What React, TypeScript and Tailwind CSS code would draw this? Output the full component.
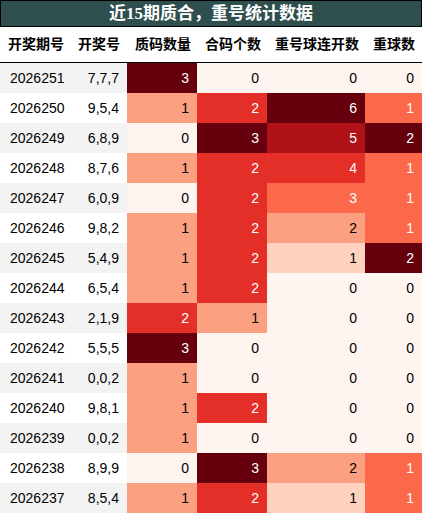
import React from 'react'

type Row = [string, string, number, number, number, number]

const rows: Row[] = [
  ['2026251', '7,7,7', 3, 0, 0, 0],
  ['2026250', '9,5,4', 1, 2, 6, 1],
  ['2026249', '6,8,9', 0, 3, 5, 2],
  ['2026248', '8,7,6', 1, 2, 4, 1],
  ['2026247', '6,0,9', 0, 2, 3, 1],
  ['2026246', '9,8,2', 1, 2, 2, 1],
  ['2026245', '5,4,9', 1, 2, 1, 2],
  ['2026244', '6,5,4', 1, 2, 0, 0],
  ['2026243', '2,1,9', 2, 1, 0, 0],
  ['2026242', '5,5,5', 3, 0, 0, 0],
  ['2026241', '0,0,2', 1, 0, 0, 0],
  ['2026240', '9,8,1', 1, 2, 0, 0],
  ['2026239', '0,0,2', 1, 0, 0, 0],
  ['2026238', '8,9,9', 0, 3, 2, 1],
  ['2026237', '8,5,4', 1, 2, 1, 1],
]

const maxes = [3, 3, 6, 2]

// Reds colormap steps, keyed by value / column max
const shade = (v: number, max: number) => {
  const r = Math.round((v / max) * 6)
  switch (r) {
    case 0: return 'bg-[#fff5f0] text-black'
    case 1: return 'bg-[#fdd2bf] text-black'
    case 2: return 'bg-[#fca082] text-black'
    case 3: return 'bg-[#fb694a] text-white'
    case 4: return 'bg-[#e32f27] text-white'
    case 5: return 'bg-[#b11218] text-white'
    default: return 'bg-[#67000d] text-white'
  }
}

const headers = ['开奖期号', '开奖号', '质码数量', '合码个数', '重号球连开数', '重球数']

const App = () => {
  return (
    <div className="w-[422px] bg-white font-['Liberation_Sans','Noto_Sans_CJK_SC',sans-serif]">
      <div className="h-[27px] border border-black bg-[#2f4f4f] flex items-center justify-center text-white font-bold text-[17px] font-['Liberation_Serif','Noto_Sans_CJK_SC',serif]">
        近15期质合，重号统计数据
      </div>
      <div className="grid grid-cols-[70px_57px_70px_70px_98px_57px] h-[36px] border-b border-black items-center">
        {headers.map((h) => (
          <div key={h} className="pl-[8px] text-[14px] font-bold text-black whitespace-nowrap">{h}</div>
        ))}
      </div>
      {rows.map((r, i) => (
        <div key={r[0]} className="grid grid-cols-[70px_57px_70px_70px_98px_57px] h-[30px] text-[14px]">
          <div className={`flex items-center pl-[10px] text-black ${i % 2 === 0 ? 'bg-[#f3f3f3]' : 'bg-white'}`}>{r[0]}</div>
          <div className={`flex items-center justify-end pr-[8px] text-black ${i % 2 === 0 ? 'bg-[#f3f3f3]' : 'bg-white'}`}>{r[1]}</div>
          {[r[2], r[3], r[4], r[5]].map((v, j) => (
            <div key={j} className={`flex items-center justify-end pr-[8px] ${shade(v, maxes[j])}`}>{v}</div>
          ))}
        </div>
      ))}
    </div>
  )
}

export default App
